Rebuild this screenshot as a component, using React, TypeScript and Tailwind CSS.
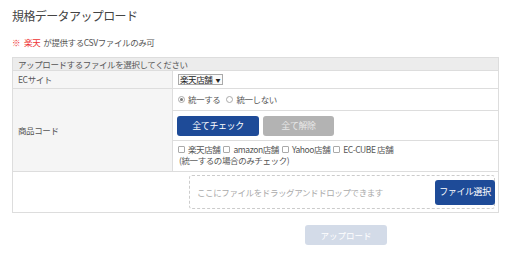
import React from "react";

const font = { fontFamily: '"Noto Sans CJK JP", "Noto Sans", sans-serif' };

export default function App() {
  return (
    <div className="w-[510px] h-[260px] bg-white text-[#555] overflow-hidden" style={font}>
      <div className="pl-[12px] pt-[6px] text-[12px] tracking-[-0.6px] leading-[20px] text-[#444]">規格データアップロード</div>
      <div className="pl-[12px] mt-[9px] text-[8.5px] tracking-[-0.4px] leading-[14px] flex">
        <span className="text-[#e33] mr-[4px]">※</span>
        <span className="text-[#e33] mr-[3px]">楽天</span>
        <span>が提供するCSVファイルのみ可</span>
      </div>
      <div className="ml-[12px] mt-[8px] w-[487px] border border-[#ddd] text-[8.5px] tracking-[-0.4px]">
        <div className="h-[13px] bg-[#ececec] border-b border-[#ddd] px-[5px] leading-[13px]">アップロードするファイルを選択してください</div>
        <div className="flex border-b border-[#ddd] h-[18px]">
          <div className="w-[160px] bg-[#f5f5f5] border-r border-[#ddd] px-[5px] leading-[17px]">ECサイト</div>
          <div className="flex-1 flex items-center px-[5px]">
            <div className="h-[11px] border border-[#aaa] bg-[#fafafa] flex items-center px-[1px] leading-[9px] text-[#222]">
              楽天店舗 <span className="ml-[3px] mr-[1px] text-[5px]">▼</span>
            </div>
          </div>
        </div>
        <div className="flex border-b border-[#ddd]">
          <div className="w-[160px] bg-[#f5f5f5] border-r border-[#ddd] px-[5px] flex items-center">商品コード</div>
          <div className="flex-1">
            <div className="h-[22px] flex items-center px-[5px] border-b border-[#ddd]">
              <span className="w-[7px] h-[7px] rounded-full border border-[#aaa] flex items-center justify-center mr-[3px]">
                <span className="w-[3px] h-[3px] rounded-full bg-[#777]" />
              </span>
              <span>統一する</span>
              <span className="w-[7px] h-[7px] rounded-full border border-[#aaa] ml-[6px] mr-[3px]" />
              <span>統一しない</span>
            </div>
            <div className="h-[30px] flex items-center gap-[4px] px-[4px] border-b border-[#ddd]">
              <div className="w-[82px] h-[20px] rounded-[3px] bg-[#1e4b98] text-white flex items-center justify-center text-[9px]">全てチェック</div>
              <div className="w-[71px] h-[20px] rounded-[3px] bg-[#b3b3b3] text-[#e8e8e8] flex items-center justify-center text-[9px]">全て解除</div>
            </div>
            <div className="px-[5px] pt-[3px] pb-[5px] leading-[11px]">
              <div className="flex items-center h-[11px]">
                <span className="w-[7px] h-[7px] border border-[#aaa] rounded-[1px] mr-[3px]" />
                <span>楽天店舗</span>
                <span className="w-[7px] h-[7px] border border-[#aaa] rounded-[1px] mx-[3px]" />
                <span>amazon店舗</span>
                <span className="w-[7px] h-[7px] border border-[#aaa] rounded-[1px] mx-[3px]" />
                <span>Yahoo店舗</span>
                <span className="w-[7px] h-[7px] border border-[#aaa] rounded-[1px] mx-[3px]" />
                <span>EC-CUBE 店舗</span>
              </div>
              <div className="pl-[1px] h-[11px]">(統一するの場合のみチェック)</div>
            </div>
          </div>
        </div>
        <div className="h-[40px] flex items-center pl-[176px] pr-[3px]">
          <div className="flex-1 h-[34px] border border-dashed border-[#ccc] rounded-[3px] flex items-center justify-between pl-[7px]">
            <span className="text-[#aaa]">ここにファイルをドラッグアンドドロップできます</span>
            <div className="w-[60px] h-[25px] rounded-[3px] bg-[#1e4b98] text-white flex items-center justify-center text-[9px] -mr-[1px]">ファイル選択</div>
          </div>
        </div>
      </div>
      <div className="flex mt-[12px] pl-[305px]">
        <div className="w-[82px] h-[20px] rounded-[3px] bg-[#d3dbe8] text-white flex items-center justify-center text-[8.5px]">アップロード</div>
      </div>
    </div>
  );
}
